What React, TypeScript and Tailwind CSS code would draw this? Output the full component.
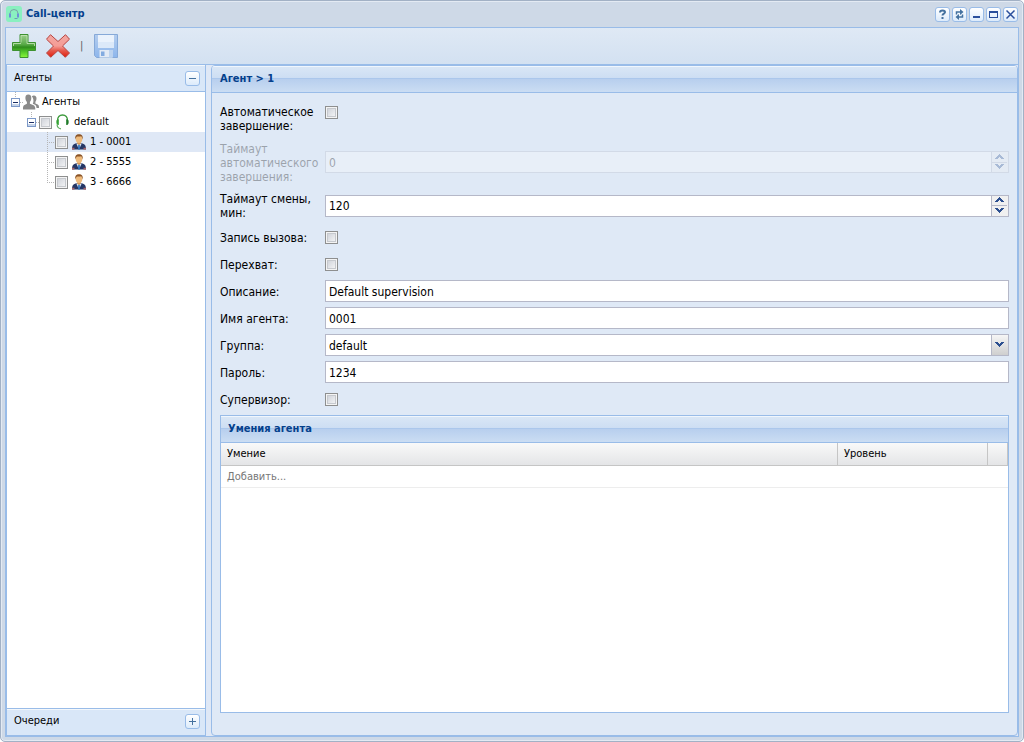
import React, { useId, useState } from 'react'

type ToolButtonProps = {
  label: string
  children: React.ReactNode
}

const ToolButton = ({ label, children }: ToolButtonProps) => (
  <button
    type="button"
    aria-label={label}
    className="size-[15px] shrink-0 rounded-[3px] border border-[#99bce8] bg-linear-to-b from-white to-[#dcebfb]"
  >
    <svg viewBox="0 0 13 13" className="size-[13px]" fill="none" shapeRendering="crispEdges">
      {children}
    </svg>
  </button>
)

const Checkbox = ({ id, label }: { id?: string; label?: string }) => (
  <input
    id={id}
    type="checkbox"
    aria-label={label}
    className="size-[13px] shrink-0 appearance-none border border-[#8e8f8f] bg-linear-to-br from-[#c8ccd4] to-[#fbfbfb] shadow-[inset_0_0_0_1px_#f4f4f4,inset_0_0_0_2px_#c6c9ce] checked:from-[#4a6fa8] checked:to-[#7ea0d0]"
  />
)

const HeadsetIcon = () => (
  <svg viewBox="0 0 16 16" className="size-4 shrink-0" fill="none">
    <path d="M2.500 7C2.300 3 4.500 1 7.500 1s5.300 2 5 6" stroke="#3f9b3f" strokeWidth="1.300" />
    <path d="M2.200 5.500c-1.200 1-1.200 4 0 5.200l1.600.3V5.200Z" fill="#34a234" />
    <path d="M12.800 5.500c1.200 1 1.200 4 0 5.200l-1.600.3V5.200Z" fill="#1f7a28" />
    <path d="M2 10.500c.3 2.500 1.500 4 4 4.300" stroke="#5aab5a" strokeWidth="1.200" />
  </svg>
)

const PeopleIcon = () => (
  <svg viewBox="0 0 16 16" className="size-4 shrink-0" fill="#8a8a8a">
    <path d="M8.800 2.300C9.400 1.700 10 1.500 10.800 1.500c2 0 2.900 1.400 2.700 3.300-.1 1.400-.6 2.300-1.100 3v1.600l2.300 1.100c1 .5 1.300 1.200 1.300 3.500h-2.500c-.1-1.900-.6-2.700-2-3.400l-1.700-.9c1.100-1.900 1-5.200-1-7.400Z" />
    <path d="M5.300.500c2.200 0 3.200 1.600 3 3.800-.1 1.700-.7 2.900-1.400 3.600v1.900l3.100 1.300c1.700.8 2.300 1.600 2.300 3.900v.500H0V15c0-2.300.2-3.100 1.500-3.900l2.400-1.300V7.900c-.7-.7-1.400-1.900-1.500-3.600-.2-2.200.8-3.800 2.900-3.800Z" />
  </svg>
)

const AgentIcon = () => (
  <svg viewBox="0 0 16 16" className="size-4 shrink-0">
    <path d="M1 15.500c0-3.700 1-5.300 3.500-6L8 8.500l3.500 1c2.500.7 3.500 2.300 3.500 6Z" fill="#253766" />
    <path d="M1 15.500v-1.800h2.500v1.800ZM12.500 15.500v-1.800H15v1.800Z" fill="#a5636a" />
    <path d="m5.300 9.500 2.700 6 2.700-6Z" fill="#dce8f5" />
    <path d="m7.300 10.500-.3 5h2l-.3-5Z" fill="#2b6cb4" />
    <path d="M6.300 7.500h3.400v2.200L8 11 6.300 9.700Z" fill="#d79a5c" />
    <ellipse cx="8" cy="5" rx="3.300" ry="4" fill="#eebb7d" />
    <path d="M4.400 5.500C3.700 2 5.200.2 8 .2s4.300 1.800 3.600 5.300c-.4-1.400-.7-2.500-1.500-3.200-1.500.4-2.800.4-4.100.1-.8.600-1.300 1.700-1.600 3.100Z" fill="#8b5427" />
  </svg>
)

// Expander of a tree node, with the dotted stem that joins it to its parent
const Expander = () => (
  <button type="button" aria-label="Свернуть" className="h-5 w-4 shrink-0">
    <svg viewBox="0 0 16 20" className="h-5 w-4" shapeRendering="crispEdges">
      <path d="M8.500 0v6M13 10.500h3" stroke="#b5b5b5" strokeDasharray="1 1" />
      <rect x="4" y="6" width="9" height="9" rx="1" fill="#7b98c8" />
      <rect x="5" y="7" width="7" height="5" fill="#fff" />
      <rect x="5" y="12" width="7" height="2" fill="#c5d3e8" />
      <rect x="6" y="10" width="5" height="1" fill="#1c2f66" />
    </svg>
  </button>
)

const Elbow = ({ last }: { last: boolean }) => (
  <svg viewBox="0 0 16 20" className="h-5 w-4 shrink-0" shapeRendering="crispEdges">
    <path d={last ? 'M8.500 0v11' : 'M8.500 0v20'} stroke="#b5b5b5" strokeDasharray="1 1" />
    <path d="M8 10.500h8" stroke="#b5b5b5" strokeDasharray="1 1" />
  </svg>
)

const agents = ['1 - 0001', '2 - 5555', '3 - 6666']

const AgentTree = () => {
  const [selected, setSelected] = useState(agents[0])

  return (
    <ul role="tree" aria-label="Агенты" className="min-h-0 flex-1 overflow-auto bg-white text-[11px]">
      <li role="treeitem">
        <div className="flex h-5 items-center">
          <Expander />
          <PeopleIcon />
          <span className="pt-px pl-[3px]">Агенты</span>
        </div>
        <ul role="group">
          <li role="treeitem">
            <div className="flex h-5 items-center pl-4">
              <Expander />
              <Checkbox label="default" />
              <span className="flex items-center gap-[3px] pl-[3px]">
                <HeadsetIcon />
                <span className="pt-px">default</span>
              </span>
            </div>
            <ul role="group">
              {agents.map((agent, index) => (
                <li
                  key={agent}
                  role="treeitem"
                  aria-selected={agent === selected}
                  onClick={() => setSelected(agent)}
                  className={`flex h-5 items-center pl-8 ${agent === selected ? 'bg-[#dfe8f6]' : ''}`}
                >
                  <Elbow last={index === agents.length - 1} />
                  <Checkbox label={agent} />
                  <span className="flex items-center gap-[3px] pl-[3px]">
                    <AgentIcon />
                    <span className="pt-px">{agent}</span>
                  </span>
                </li>
              ))}
            </ul>
          </li>
        </ul>
      </li>
    </ul>
  )
}

type RowProps = {
  label: string
  disabled?: boolean
  className?: string
  children: (id: string) => React.ReactNode
}

const Row = ({ label, disabled = false, className = 'h-[22px] items-center', children }: RowProps) => {
  const id = useId()

  return (
    <div className={`flex ${disabled ? 'opacity-30' : ''} ${className}`}>
      <label htmlFor={id} className="w-[105px] shrink-0 pt-px leading-[14px]">
        {label}
      </label>
      {children(id)}
    </div>
  )
}

const fieldClass =
  'h-[22px] w-full min-w-0 flex-1 appearance-none rounded-none border border-[#b5b8c8] bg-white px-[3px] pt-px text-[12px] outline-none focus:border-[#7eadd9]'

const Chevron = ({ up = false }: { up?: boolean }) => (
  <svg viewBox="0 0 9 6" className="h-[6px] w-[9px]" fill="#2c4f8f" shapeRendering="crispEdges">
    {up ? (
      <path d="M4 0h1v1h1v1h1v1h1v1h1v1H6V4H5V3H4v1H3v1H0V4h1V3h1V2h1V1h1Z" />
    ) : (
      <path d="M0 0h3v1h1v1h1V1h1V0h3v1H8v1H7v1H6v1H5v1H4V4H3V3H2V2H1V1H0Z" />
    )}
  </svg>
)

type SpinnerProps = {
  id: string
  initial: number
  disabled?: boolean
}

const Spinner = ({ id, initial, disabled = false }: SpinnerProps) => {
  const [value, setValue] = useState(initial)

  return (
    <div className="flex min-w-0 flex-1">
      <input
        id={id}
        type="number"
        value={value}
        disabled={disabled}
        onChange={(e) => setValue(Number(e.target.value))}
        className={`${fieldClass} [appearance:textfield]`}
      />
      <div className="flex h-[22px] w-[17px] flex-col divide-y divide-[#b5b8c8] border border-l-0 border-[#b5b8c8] bg-[#f0f0f0] pr-px">
        <button
          type="button"
          aria-label="Увеличить"
          disabled={disabled}
          onClick={() => setValue(value + 1)}
          className="flex flex-1 items-center justify-center"
        >
          <Chevron up />
        </button>
        <button
          type="button"
          aria-label="Уменьшить"
          disabled={disabled}
          onClick={() => setValue(value - 1)}
          className="flex flex-1 items-center justify-center"
        >
          <Chevron />
        </button>
      </div>
    </div>
  )
}

const panelHeaderClass =
  'flex h-[27px] shrink-0 items-center border-b border-[#99bce8] bg-[linear-gradient(#dae7f6,#cddef3_45%,#abc7ec_46%,#abc7ec_50%,#b8cfee_51%,#cbddf3)] pt-px text-[11px] font-bold text-[#04408c] shadow-[inset_0_1px_0_#f0f6fd]'

const SkillsGrid = () => (
  <section className="flex min-h-0 flex-1 flex-col border border-[#99bce8] bg-white">
    <h3 className={`${panelHeaderClass} px-[7px]`}>Умения агента</h3>
    <table className="w-full table-fixed border-separate border-spacing-0 text-left text-[11px]">
      <thead>
        <tr className="h-[23px] bg-linear-to-b from-[#f9f9f9] to-[#e3e4e6]">
          <th className="border-r border-b border-[#c5c5c5] px-[6px] font-normal">Умение</th>
          <th className="w-[150px] border-r border-b border-[#c5c5c5] px-[6px] font-normal">Уровень</th>
          <td className="w-5 border-r border-b border-[#c5c5c5]" />
        </tr>
      </thead>
      <tbody>
        <tr className="h-[22px] text-[#777777]">
          <td colSpan={3} className="border-b border-[#ededed] px-[6px] pt-px">
            Добавить...
          </td>
        </tr>
      </tbody>
    </table>
  </section>
)

const AgentForm = () => (
  <form className="flex min-h-0 flex-1 flex-col gap-[5px] px-2 pt-[10px] pb-[22px] text-[12px]">
    <Row label="Автоматическое завершение:" className="h-[31px] items-center">
      {(id) => (
        <div className="flex self-start pt-[3px]">
          <Checkbox id={id} />
        </div>
      )}
    </Row>
    <Row label="Таймаут автоматического завершения:" disabled className="h-[46px] items-center">
      {(id) => <Spinner id={id} initial={0} disabled />}
    </Row>
    <Row label="Таймаут смены, мин:" className="h-[31px] items-center">
      {(id) => <Spinner id={id} initial={120} />}
    </Row>
    <Row label="Запись вызова:">{(id) => <Checkbox id={id} />}</Row>
    <Row label="Перехват:">{(id) => <Checkbox id={id} />}</Row>
    <Row label="Описание:">
      {(id) => <input id={id} type="text" defaultValue="Default supervision" className={fieldClass} />}
    </Row>
    <Row label="Имя агента:">
      {(id) => <input id={id} type="text" defaultValue="0001" className={fieldClass} />}
    </Row>
    <Row label="Группа:">
      {(id) => (
        <div className="relative flex min-w-0 flex-1">
          <select id={id} defaultValue="default" className={fieldClass}>
            <option>default</option>
          </select>
          <span className="pointer-events-none absolute inset-y-px right-px flex w-[17px] justify-center border-l border-[#b5b8c8] bg-linear-to-b from-[#f6f6f6] to-[#cfcfcf] pt-[7px] pr-px">
            <Chevron />
          </span>
        </div>
      )}
    </Row>
    <Row label="Пароль:">
      {(id) => <input id={id} type="text" defaultValue="1234" className={fieldClass} />}
    </Row>
    <Row label="Супервизор:">{(id) => <Checkbox id={id} />}</Row>
    <SkillsGrid />
  </form>
)

const Toolbar = () => (
  <div
    role="toolbar"
    className="flex h-[37px] shrink-0 items-center gap-[10px] border-b border-[#99bce8] bg-linear-to-b from-[#dfe9f5] to-[#d3e1f1] px-[6px]"
  >
    <button type="button" aria-label="Добавить">
      <svg viewBox="0 0 24 24" className="size-6">
        <defs>
          <linearGradient id="plus" x1="0" y1="0" x2="0" y2="1">
            <stop offset="0" stopColor="#9fd08f" />
            <stop offset="0.450" stopColor="#55a843" />
            <stop offset="0.550" stopColor="#2f8c1c" />
            <stop offset="0.750" stopColor="#52c72a" />
            <stop offset="1" stopColor="#8bf83c" />
          </linearGradient>
        </defs>
        <path d="M8 .5h8v8h7.500v8H16v7H8v-7H.5v-8H8Z" fill="url(#plus)" stroke="#3d9130" strokeLinejoin="round" />
        <path d="M9 8.500v-7h6v8h7.500V12M1.500 12V9.500H9" fill="none" stroke="#c5e5b8" strokeOpacity="0.800" />
      </svg>
    </button>
    <button type="button" aria-label="Удалить">
      <svg viewBox="0 0 24 24" className="size-6">
        <defs>
          <linearGradient id="cross" x1="0" y1="0" x2="0" y2="1">
            <stop offset="0" stopColor="#f2a8a3" />
            <stop offset="0.500" stopColor="#f59c95" />
            <stop offset="0.700" stopColor="#e65a4d" />
            <stop offset="1" stopColor="#e01d0c" />
          </linearGradient>
        </defs>
        <path
          d="M4.500.7 12 7.500 19.500.7l4 4.500-7 6.800 7 7-4.200 4.300L12 16.500l-7.300 6.800L.5 19l7-7-7-6.800Z"
          fill="url(#cross)"
          stroke="#b8443f"
          strokeLinejoin="round"
        />
      </svg>
    </button>
    <span className="text-[11px] text-[#5c5c5c]">|</span>
    <button type="button" aria-label="Сохранить" disabled className="pl-px">
      <svg viewBox="0 0 24 24" className="size-6">
        <defs>
          <linearGradient id="disk" x1="0" y1="0" x2="0" y2="1">
            <stop offset="0" stopColor="#b4cdee" />
            <stop offset="1" stopColor="#8db6ec" />
          </linearGradient>
        </defs>
        <path d="M.5.5h23v23h-21l-2-2Z" fill="url(#disk)" stroke="#86a9d8" />
        <path d="M4 1h16v13H4Z" fill="#eaf2fc" />
        <path d="M4 8h16v6H4Z" fill="#dce9f9" />
        <path d="M5.500 16h13v7.500h-13Z" fill="#e2eaf5" />
        <path d="M7 17.500h3.500V22H7Z" fill="#82abe0" />
        <path d="M15 16h3.500v7.500H15Z" fill="#bcd3ef" />
      </svg>
    </button>
  </div>
)

const accordionHeaderClass =
  'flex h-[27px] shrink-0 items-center justify-between bg-[#d9e7f8] pr-[5px] pl-[7px] text-[11px] shadow-[inset_0_1px_0_#f3f7fb]'

const App = () => (
  <main className="flex h-screen min-h-[560px] flex-col rounded-[5px] border border-[#a2b1c5] bg-[#ced9e7] px-1 pb-1 font-['DejaVu_Sans_Condensed','DejaVu_Sans',sans-serif] text-black shadow-[inset_0_0_0_1px_#e3eaf3]">
    <header className="flex h-[26px] shrink-0 items-center gap-1 px-px">
      <svg viewBox="0 0 16 16" className="size-4" fill="none">
        <rect width="16" height="16" rx="3" fill="#8af0c0" />
        <path d="M4 8.500V7.500a4 4 0 0 1 8 0v1" stroke="#7ba3a8" />
        <path d="M4 7.500v4M12 7.500v4" stroke="#6d8fd8" strokeWidth="2" />
        <path d="M11.500 12.500h-3" stroke="#6b9ab5" />
      </svg>
      <h1 className="flex-1 pt-px text-[11px] font-bold text-[#04408c]">Call-центр</h1>
      <div className="flex gap-[2px]">
        <ToolButton label="Справка">
          <path
            d="M4 4.500C4 2.800 5 2.500 6.500 2.500S9 3 9 4.300 6.500 5.800 6.500 7.500M6.500 9v2"
            stroke="#44719f"
            strokeWidth="2"
            shapeRendering="auto"
          />
        </ToolButton>
        <ToolButton label="Обновить">
          <path d="M3.500 6.500V4H8M9.500 6.500V9H5" stroke="#44719f" strokeWidth="1.500" shapeRendering="auto" />
          <path d="M7 1v6l3.500-3ZM6 6v6L2.500 9Z" fill="#44719f" shapeRendering="auto" />
        </ToolButton>
        <ToolButton label="Свернуть">
          <path d="M3 8h7v2H3Z" fill="#2a4f9c" />
        </ToolButton>
        <ToolButton label="Развернуть">
          <path d="M2 3h9v7H2ZM3 5v4h7V5Z" fill="#2a4f9c" fillRule="evenodd" />
        </ToolButton>
        <ToolButton label="Закрыть">
          <path d="m2.500 2.500 8 8M10.500 2.500l-8 8" stroke="#2a4f9c" strokeWidth="1.500" shapeRendering="auto" />
        </ToolButton>
      </div>
    </header>

    <div className="flex min-h-0 flex-1 flex-col border border-[#99bce8] bg-[#dfe8f6]">
      <Toolbar />
      <div className="flex min-h-0 flex-1 gap-[5px]">
        <aside className="flex w-[200px] shrink-0 flex-col border border-t-0 border-[#99bce8]">
          <h2 className={`${accordionHeaderClass} border-b border-[#99bce8]`}>
            <span className="pt-px">Агенты</span>
            <ToolButton label="Свернуть Агенты">
              <path d="M3 6h7v1H3Z" fill="#44719f" />
            </ToolButton>
          </h2>
          <AgentTree />
          <h2 className={`${accordionHeaderClass} border-t border-[#99bce8] pb-px`}>
            Очереди
            <ToolButton label="Развернуть Очереди">
              <path d="M3 6h7v1H3ZM6 3h1v7H6Z" fill="#44719f" />
            </ToolButton>
          </h2>
        </aside>
        <section className="flex min-w-0 flex-1 flex-col overflow-hidden rounded-[4px] border border-[#99bce8] bg-[#dfe9f6]">
          <h2 className={`${panelHeaderClass} px-2`}>Агент &gt; 1</h2>
          <AgentForm />
        </section>
      </div>
    </div>
  </main>
)

export default App
